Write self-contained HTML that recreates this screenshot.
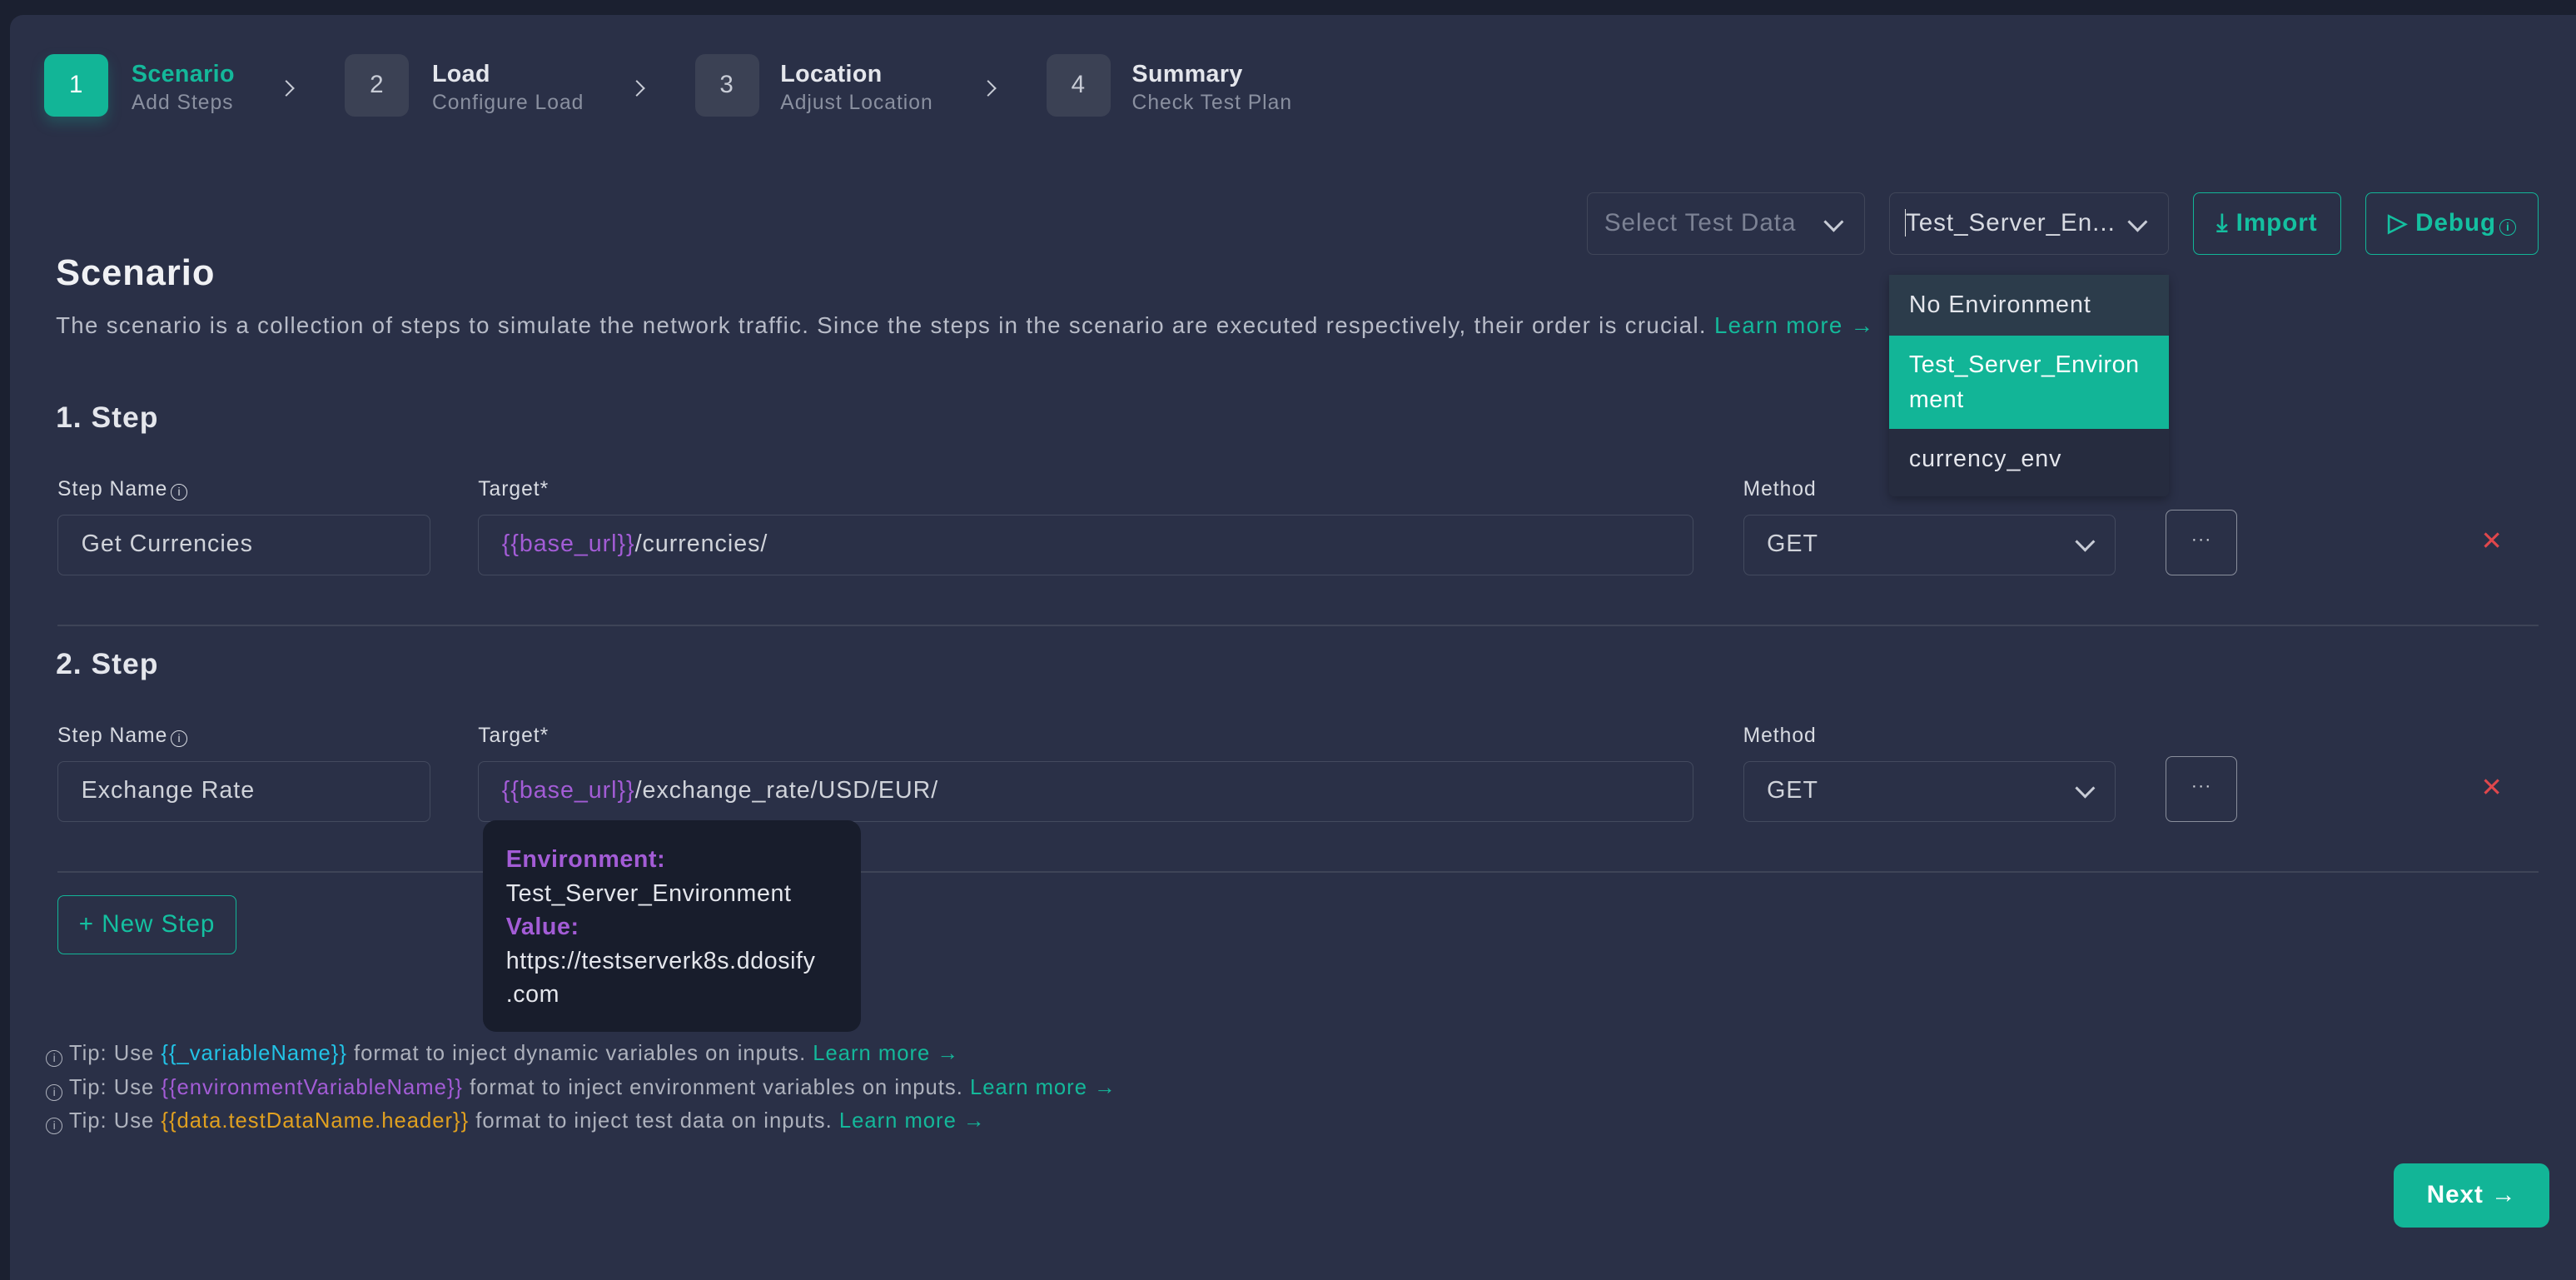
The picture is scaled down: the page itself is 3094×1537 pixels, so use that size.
<!DOCTYPE html>
<html><head><meta charset="utf-8"><style>
html,body{margin:0;padding:0;background:#1b2030;}
body{width:3094px;height:1518px;overflow:hidden;}
#r{zoom:1.9732;width:1568px;height:769px;position:relative;font-family:"Liberation Sans",sans-serif;color:#e4e6ec;letter-spacing:0.5px;}
.panel{position:absolute;left:6px;top:9px;width:1570px;height:770px;background:#2a3047;border-radius:8px 0 0 0;}
.a{position:absolute;}
.box{position:absolute;width:39px;height:38px;border-radius:6px;background:#3b4154;color:#c8ccd6;font-size:15px;text-align:center;line-height:38px;}
.st{position:absolute;font-size:14.5px;font-weight:bold;color:#e4e6ec;letter-spacing:0.2px;}
.ss{position:absolute;font-size:12.5px;color:#8a90a0;}
.chev{position:absolute;width:6px;height:6px;border-right:1.5px solid #c8ccd6;border-top:1.5px solid #c8ccd6;transform:rotate(45deg);}
.sel{position:absolute;border:1px solid #404659;border-radius:4px;height:38px;box-sizing:border-box;font-size:15px;line-height:36px;padding-left:10px;}
.dv{position:absolute;right:14px;top:13px;width:7px;height:7px;border-right:2px solid #c8ccd6;border-bottom:2px solid #c8ccd6;transform:rotate(45deg);}
.obtn{position:absolute;border:1px solid #12b597;border-radius:4px;color:#14c0a0;font-size:15px;font-weight:bold;box-sizing:border-box;text-align:center;}
.lbl{position:absolute;font-size:12.5px;color:#d8dbe2;}
.ci{display:inline-block;width:9px;height:9px;border:1px solid currentColor;border-radius:50%;font-size:7px;line-height:9px;text-align:center;font-style:normal;letter-spacing:0;vertical-align:0px;margin-left:2px;}
.inp{position:absolute;border:1px solid #434a5e;border-radius:4px;height:37px;box-sizing:border-box;font-size:14.5px;line-height:35px;padding-left:14px;color:#d0d3da;}
.pu{color:#a35cd6;}
.x{position:absolute;color:#e0474c;font-size:16px;}
.hr{position:absolute;left:35px;width:1510px;height:1px;background:#3e4457;}
.tip{position:absolute;left:28px;font-size:13px;color:#aeb2bd;}
.tip .ci{margin:0 4px 0 0;vertical-align:-1px;}
.tl{color:#14b89a;}
</style></head><body><div id="r">
<div class="panel"></div>
<div class="box" style="left:27px;top:33px;background:#12b597;color:#fff;box-shadow:0 4px 8px rgba(18,181,151,.25)">1</div>
<div class="st" style="left:80px;top:37px;color:#14b89a">Scenario</div><div class="ss" style="left:80px;top:56px">Add Steps</div>
<div class="chev" style="left:171px;top:50px"></div>
<div class="box" style="left:210px;top:33px">2</div>
<div class="st" style="left:263px;top:37px">Load</div><div class="ss" style="left:263px;top:56px">Configure Load</div>
<div class="chev" style="left:384px;top:50px"></div>
<div class="box" style="left:423px;top:33px">3</div>
<div class="st" style="left:475px;top:37px">Location</div><div class="ss" style="left:475px;top:56px">Adjust Location</div>
<div class="chev" style="left:598px;top:50px"></div>
<div class="box" style="left:637px;top:33px">4</div>
<div class="st" style="left:689px;top:37px">Summary</div><div class="ss" style="left:689px;top:56px">Check Test Plan</div>

<div class="sel" style="left:966px;top:117px;width:169px;color:#7c8294">Select Test Data<div class="dv"></div></div>
<div class="sel" style="left:1150px;top:117px;width:170px;color:#d8dbe2"><span style="border-left:1px solid #ddd;margin-left:-1px"></span>Test_Server_En...<div class="dv"></div></div>
<div class="obtn" style="left:1335px;top:117px;width:90px;height:38px;line-height:36px">⤓ Import</div>
<div class="obtn" style="left:1440px;top:117px;width:105px;height:38px;line-height:36px">▷ Debug<span class="ci">i</span></div>

<div class="a" style="left:34px;top:154px;font-size:22px;font-weight:bold;color:#f0f1f4">Scenario</div>
<div class="a" style="left:34px;top:190px;font-size:14px;color:#b8bcc8;letter-spacing:0.68px">The scenario is a collection of steps to simulate the network traffic. Since the steps in the scenario are executed respectively, their order is crucial. <span class="tl">Learn more →</span></div>

<div class="a" style="left:34px;top:244px;font-size:18px;font-weight:bold">1. Step</div>
<div class="lbl" style="left:35px;top:291px">Step Name<span class="ci">i</span></div><div class="lbl" style="left:291px;top:291px">Target*</div><div class="lbl" style="left:1061px;top:291px">Method</div>
<div class="inp" style="left:35px;top:313px;width:227px">Get Currencies</div>
<div class="inp" style="left:291px;top:313px;width:740px"><span class="pu">{{base_url}}</span>/currencies/</div>
<div class="inp" style="left:1061px;top:313px;width:227px">GET<div class="dv" style="top:12px"></div></div>
<div class="inp" style="left:1318px;top:310px;width:44px;height:40px;border-color:#8a8f9c;padding:0;text-align:center;line-height:34px;font-size:11px">···</div>
<div class="x" style="left:1510px;top:320px">✕</div>
<div class="hr" style="top:380px"></div>

<div class="a" style="left:34px;top:394px;font-size:18px;font-weight:bold">2. Step</div>
<div class="lbl" style="left:35px;top:441px">Step Name<span class="ci">i</span></div><div class="lbl" style="left:291px;top:441px">Target*</div><div class="lbl" style="left:1061px;top:441px">Method</div>
<div class="inp" style="left:35px;top:463px;width:227px">Exchange Rate</div>
<div class="inp" style="left:291px;top:463px;width:740px"><span class="pu">{{base_url}}</span>/exchange_rate/USD/EUR/</div>
<div class="inp" style="left:1061px;top:463px;width:227px">GET<div class="dv" style="top:12px"></div></div>
<div class="inp" style="left:1318px;top:460px;width:44px;height:40px;border-color:#8a8f9c;padding:0;text-align:center;line-height:34px;font-size:11px">···</div>
<div class="x" style="left:1510px;top:470px">✕</div>
<div class="hr" style="top:530px"></div>

<div class="obtn" style="left:35px;top:545px;width:109px;height:36px;line-height:34px;font-weight:normal">+ New Step</div>

<div class="a" style="left:294px;top:499px;width:230px;height:129px;background:#181d2c;border-radius:8px;"></div>
<div class="a" style="left:308px;top:513px;font-size:14.5px;line-height:20.5px;color:#e4e6ec;width:214px;letter-spacing:0.3px"><b class="pu">Environment:</b><br>Test_Server_Environment<br><b class="pu">Value:</b><br>https://testserverk8s.ddosify<br>.com</div>

<div class="a" style="left:1150px;top:167px;width:170px;height:135px;background:#262c3f;border-radius:3px;box-shadow:0 2px 6px rgba(0,0,0,.3)"></div>
<div class="a" style="left:1150px;top:167px;width:170px;height:37px;background:#2c3c4b;font-size:14.5px;line-height:37px;padding-left:12px;box-sizing:border-box">No Environment</div>
<div class="a" style="left:1150px;top:204px;width:170px;height:57px;background:#12b597;font-size:14.5px;line-height:21px;padding:8px 0 0 12px;box-sizing:border-box;color:#fff;letter-spacing:0.3px">Test_Server_Environ<br>ment</div>
<div class="a" style="left:1150px;top:261px;width:170px;height:37px;font-size:14.5px;line-height:37px;padding-left:12px;box-sizing:border-box">currency_env</div>

<div class="tip" style="top:634px"><span class="ci">i</span>Tip: Use <span style="color:#22c3e6">{{_variableName}}</span> format to inject dynamic variables on inputs. <span class="tl">Learn more →</span></div>
<div class="tip" style="top:655px"><span class="ci">i</span>Tip: Use <span class="pu">{{environmentVariableName}}</span> format to inject environment variables on inputs. <span class="tl">Learn more →</span></div>
<div class="tip" style="top:675px"><span class="ci">i</span>Tip: Use <span style="color:#e0a020">{{data.testDataName.header}}</span> format to inject test data on inputs. <span class="tl">Learn more →</span></div>

<div class="a" style="left:1457px;top:708px;width:95px;height:39px;background:#12b597;border-radius:6px;color:#fff;font-size:15px;font-weight:bold;text-align:center;line-height:39px">Next →</div>
</div></body></html>
